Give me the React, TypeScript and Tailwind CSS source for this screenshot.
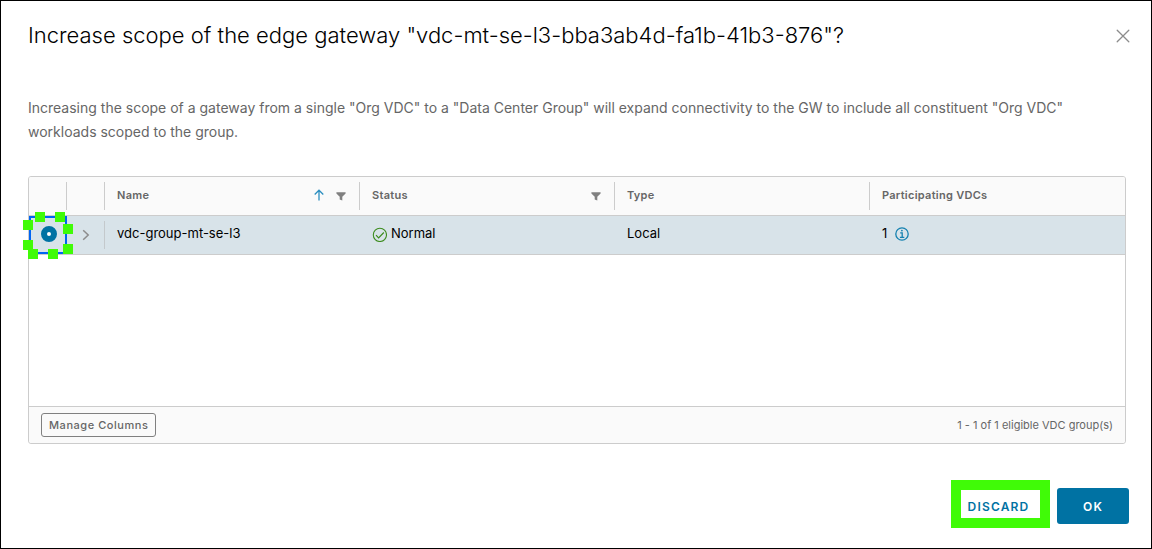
import { useState } from "react";

const FilterIcon = () => (
  <svg width="10" height="9" viewBox="0 0 10 9" fill="#808080" aria-hidden="true">
    <path d="M0.4 0.3h9.2v1.3L6.3 4.8V8.4L3.7 7.6V4.8L0.4 1.6z" />
  </svg>
);

const HANDLES: [number, number][] = [
  [12, 0],
  [32, 0],
  [0, 8],
  [0, 28],
  [40, 12],
  [40, 32],
  [5, 37],
  [25, 37],
];

const SelectionMarker = () => (
  <svg
    className="pointer-events-none absolute -left-1.5 -top-1"
    width="50"
    height="47"
    viewBox="0 0 50 47"
    aria-hidden="true"
  >
    <rect x="7" y="5" width="36" height="36" fill="none" stroke="#0065f2" strokeWidth="2" />
    {HANDLES.map(([x, y]) => (
      <rect key={`${x}-${y}`} x={x} y={y} width="10" height="10" fill="#40fb07" />
    ))}
  </svg>
);

const headCell = "flex h-7 items-center border-r border-[#cccccc] pb-0.5 pl-3 pr-3";
const headText = "text-[11px] font-semibold leading-6 tracking-wide text-[#666666]";
const cell = "flex h-[38px] items-center px-3 pb-0.5 text-[13px]";

export default function App() {
  const [selected, setSelected] = useState(true);

  return (
    <main
      role="dialog"
      aria-labelledby="dialog-title"
      className="flex min-h-screen flex-col border border-black bg-white pb-6 pl-[27px] pr-[25px] pt-[18px] font-['Inter','Liberation_Sans',sans-serif] text-black"
    >
      <header className="-mr-1 flex items-start justify-between">
        <h1 id="dialog-title" className="text-[22px] font-light leading-8">
          Increase scope of the edge gateway "vdc-mt-se-l3-bba3ab4d-fa1b-41b3-876"?
        </h1>
        <button type="button" aria-label="Close" className="mt-2 flex py-0.5">
          <svg width="14" height="14" viewBox="0 0 14 14" fill="none" stroke="#8c8c8c" strokeWidth="1.3" strokeLinecap="round">
            <path d="M1.2 1.2l11.6 11.6M12.8 1.2L1.2 12.8" />
          </svg>
        </button>
      </header>

      <p className="mt-[45px] pr-8 text-sm leading-6 text-[#666666]">
        Increasing the scope of a gateway from a single "Org VDC" to a "Data Center Group" will expand connectivity to the
        GW to include all constituent "Org VDC" workloads scoped to the group.
      </p>

      <section className="mt-8 flex flex-col rounded-[3px] border border-[#cccccc]">
        <div className="min-h-[229px]">
          <table className="w-full table-fixed border-separate border-spacing-0 text-left">
            <colgroup>
              <col className="w-[38px]" />
              <col className="w-[38px]" />
              <col />
              <col />
              <col />
              <col />
            </colgroup>
            <thead>
              <tr className="h-[39px] bg-[#fafafa] align-middle">
                <th className="rounded-tl-[2px] border-b border-[#cccccc] p-0" aria-label="Select">
                  <div className={headCell} />
                </th>
                <th className="border-b border-[#cccccc] p-0" aria-label="Expand">
                  <div className={headCell} />
                </th>
                <th className="border-b border-[#cccccc] p-0" aria-sort="ascending">
                  <div className={headCell}>
                    <button type="button" className={`flex-1 text-left ${headText}`}>
                      Name
                    </button>
                    <svg width="10" height="12" viewBox="0 0 10 12" fill="none" stroke="#2d8fc0" strokeWidth="1.3" className="mr-3" aria-hidden="true">
                      <path d="M5 11.5V1.3M0.7 5.5L5 1.2l4.3 4.3" />
                    </svg>
                    <button type="button" aria-label="Filter by name" className="flex pr-px pt-0.5">
                      <FilterIcon />
                    </button>
                  </div>
                </th>
                <th className="border-b border-[#cccccc] p-0">
                  <div className={headCell}>
                    <button type="button" className={`flex-1 text-left ${headText}`}>
                      Status
                    </button>
                    <button type="button" aria-label="Filter by status" className="flex pr-px pt-0.5">
                      <FilterIcon />
                    </button>
                  </div>
                </th>
                <th className="border-b border-[#cccccc] p-0">
                  <div className={headCell}>
                    <span className={headText}>Type</span>
                  </div>
                </th>
                <th className="rounded-tr-[2px] border-b border-[#cccccc] p-0">
                  <div className="flex h-7 items-center px-3 pb-0.5">
                    <span className={headText}>Participating VDCs</span>
                  </div>
                </th>
              </tr>
            </thead>
            <tbody>
              <tr className="bg-[#d8e3e9]">
                <td className="border-b border-[#cccccc] p-0">
                  <div className="relative flex h-[38px] items-center pb-0.5 pl-3">
                    <input
                      type="radio"
                      name="vdc-group"
                      aria-label="Select vdc-group-mt-se-l3"
                      checked={selected}
                      onChange={() => setSelected(true)}
                      className="size-4 appearance-none rounded-full border border-[#8c8c8c] bg-white checked:border-[6px] checked:border-[#0072a3]"
                    />
                    <SelectionMarker />
                  </div>
                </td>
                <td className="border-b border-[#cccccc] p-0">
                  <div className="flex h-7 items-center justify-center border-r border-[#c4c9cc]">
                    <button type="button" aria-label="Expand row" className="flex">
                      <svg width="8" height="12" viewBox="0 0 8 12" fill="none" stroke="#8c8c8c" strokeWidth="1.5">
                        <path d="M1.2 1.2L6.2 6L1.2 10.8" />
                      </svg>
                    </button>
                  </div>
                </td>
                <td className="border-b border-[#cccccc] p-0">
                  <div className={cell}>vdc-group-mt-se-l3</div>
                </td>
                <td className="border-b border-[#cccccc] p-0">
                  <div className={`${cell} gap-1`}>
                    <svg width="15" height="16" viewBox="0 0 15 16" fill="none" stroke="#3c8c1e" aria-hidden="true">
                      <circle cx="7.9" cy="8.9" r="6.6" strokeWidth="1.1" />
                      <path d="M4 9.2l2.6 2.6 5.2-5.3" strokeWidth="1.2" />
                    </svg>
                    Normal
                  </div>
                </td>
                <td className="border-b border-[#cccccc] p-0">
                  <div className={cell}>Local</div>
                </td>
                <td className="border-b border-[#cccccc] p-0">
                  <div className={`${cell} gap-2`}>
                    1
                    <button type="button" aria-label="Participating VDC details" className="flex">
                      <svg width="14" height="14" viewBox="0 0 14 14" fill="none" stroke="#1481b0">
                        <circle cx="7" cy="7" r="6.2" strokeWidth="1.3" />
                        <path d="M5.2 5.8h2v4.4M4.9 10.3h4.4" strokeWidth="1.3" />
                        <circle cx="6.9" cy="3.6" r="0.9" fill="#1481b0" stroke="none" />
                      </svg>
                    </button>
                  </div>
                </td>
              </tr>
            </tbody>
          </table>
        </div>
        <footer className="flex items-center justify-between rounded-b-[3px] border-t border-[#cccccc] bg-[#fafafa] px-3 py-1.5 text-[#666666]">
          <button
            type="button"
            className="h-6 rounded-[3px] border border-[#808080] px-[7px] text-[11px] font-medium tracking-wider"
          >
            Manage Columns
          </button>
          <span className="text-[11px]">1 - 1 of 1 eligible VDC group(s)</span>
        </footer>
      </section>

      <div className="-mr-[3px] mt-11 flex justify-end gap-4 text-xs font-semibold tracking-widest">
        <div className="relative">
          <button type="button" className="h-9 w-[81px] pr-1 pt-0.5 text-[#0072a3]">
            DISCARD
          </button>
          <div className="pointer-events-none absolute -bottom-1 -left-[9px] -right-[9px] -top-2 border-10 border-[#40fb07]" />
        </div>
        <button type="button" className="h-9 w-[72px] rounded-[3px] bg-[#0072a3] pt-0.5 text-white">
          OK
        </button>
      </div>
    </main>
  );
}
